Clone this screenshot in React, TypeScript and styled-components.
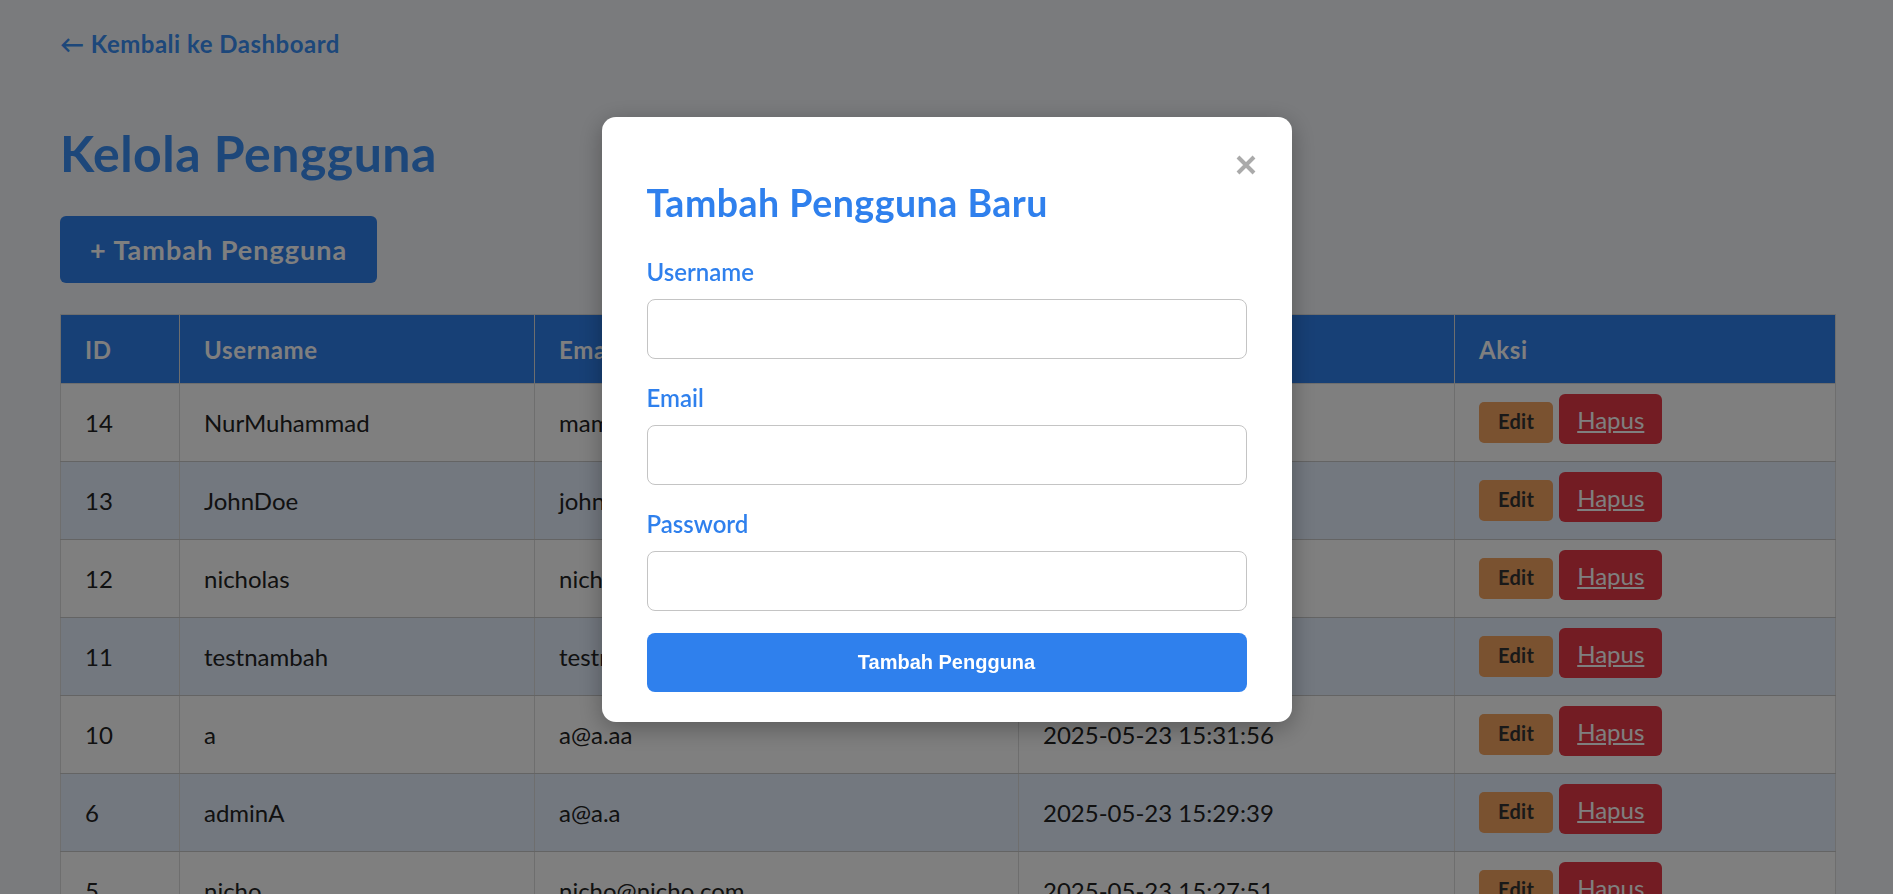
import React from "react";
import styled, { createGlobalStyle } from "styled-components";

const GlobalStyle = createGlobalStyle`
  * { box-sizing: border-box; }
  html, body { margin: 0; padding: 0; }
  body {
    background: #f5f7fa;
    font-family: Lato, "Open Sans", sans-serif;
    color: #222;
  }
`;

const Page = styled.div`
  padding: 28px 57px 40px 60px;
`;

const TopBar = styled.div`
  display: flex;
`;

const BackLink = styled.a`
  font-size: 24px;
  line-height: 32px;
  font-weight: 700;
  letter-spacing: 0.5px;
  color: #3a8ff5;
  text-decoration: none;
`;

const Title = styled.h1`
  margin: 63px 0 33px;
  font-size: 50px;
  line-height: 60px;
  font-weight: 700;
  letter-spacing: 0.5px;
  color: #3a8ff5;
`;

const AddButton = styled.button`
  display: block;
  height: 67px;
  padding: 0 30px;
  margin-bottom: 31px;
  border: none;
  border-radius: 6px;
  background: #2f80ed;
  color: #fff;
  font-family: inherit;
  font-size: 27px;
  font-weight: 700;
  letter-spacing: 1px;
`;

const Table = styled.table`
  width: 100%;
  border-collapse: collapse;
  table-layout: fixed;
  font-size: 24px;
  line-height: 33px;
`;

const Th = styled.th`
  padding: 18px 24px 17px;
  background: #2f80ed;
  color: #fff;
  font-weight: 700;
  letter-spacing: 0.7px;
  text-align: left;
  border: 1px solid #ddd;
`;

const Row = styled.tr`
  background: #fff;
  &:nth-child(even) {
    background: #e6f0ff;
  }
`;

const Td = styled.td`
  padding: 22px 24px;
  border: 1px solid #ddd;
  border-bottom-color: #c8c8c8;
  white-space: nowrap;
  overflow: hidden;
`;

const ActionTd = styled(Td)`
  padding: 19px 24px 25px;
  overflow: visible;
`;

const EditLink = styled.a`
  padding: 7px 19px 10px;
  margin-right: 6px;
  border-radius: 5px;
  background: #f4a460;
  color: #333;
  font-size: 20px;
  line-height: 1;
  font-weight: 700;
  letter-spacing: 0.3px;
  text-decoration: none;
`;

const DeleteLink = styled.a`
  padding: 11px 18px 10px;
  border-radius: 6px;
  background: #e63946;
  color: #fff;
  font-size: 24px;
  line-height: 1;
  text-decoration: underline;
`;

const Overlay = styled.div`
  position: fixed;
  inset: 0;
  display: flex;
  justify-content: center;
  align-items: flex-start;
  padding-top: 117px;
  background: rgba(0, 0, 0, 0.5);
`;

const Modal = styled.div`
  position: relative;
  width: 690px;
  padding: 63px 45px 30px;
  border-radius: 14px;
  background: #fff;
  box-shadow: 0 6px 24px rgba(0, 0, 0, 0.3);
`;

const CloseButton = styled.button`
  position: absolute;
  top: 38px;
  right: 36px;
  width: 20px;
  height: 20px;
  padding: 0;
  border: none;
  background: none;
  color: #aaa;
  display: flex;
`;

const ModalTitle = styled.h2`
  margin: 0 0 31px;
  font-size: 37.5px;
  line-height: 45px;
  font-weight: 700;
  letter-spacing: 0.5px;
  color: #2f80ed;
`;

const Field = styled.div`
  margin-bottom: 23px;
  &:last-of-type {
    margin-bottom: 22px;
  }
`;

const Label = styled.label`
  display: block;
  margin-bottom: 11px;
  font-size: 24px;
  line-height: 32px;
  font-weight: 600;
  color: #2f80ed;
`;

const Input = styled.input`
  display: block;
  width: 100%;
  height: 60px;
  padding: 0 18px;
  border: 1px solid #c4c4c4;
  border-radius: 8px;
  font-family: inherit;
  font-size: 24px;
`;

const SubmitButton = styled.button`
  display: block;
  width: 100%;
  height: 59px;
  border: none;
  border-radius: 8px;
  background: #2f80ed;
  color: #fff;
  font-family: "Liberation Sans", Arial, sans-serif;
  font-size: 20px;
  font-weight: 700;
`;

const users = [
  { id: 14, username: "NurMuhammad", email: "mamad@gmail.com", created: "2025-05-24 09:12:40" },
  { id: 13, username: "JohnDoe", email: "john@doe.com", created: "2025-05-24 08:55:17" },
  { id: 12, username: "nicholas", email: "nicholas@gmail.com", created: "2025-05-23 16:02:11" },
  { id: 11, username: "testnambah", email: "testnambah@gmail.com", created: "2025-05-23 15:40:03" },
  { id: 10, username: "a", email: "a@a.aa", created: "2025-05-23 15:31:56" },
  { id: 6, username: "adminA", email: "a@a.a", created: "2025-05-23 15:29:39" },
  { id: 5, username: "nicho", email: "nicho@nicho.com", created: "2025-05-23 15:27:51" },
];

const fields = [
  { name: "username", label: "Username", type: "text" },
  { name: "email", label: "Email", type: "email" },
  { name: "password", label: "Password", type: "password" },
];

export default function App() {
  return (
    <>
      <GlobalStyle />
      <Page>
        <TopBar>
          <BackLink href="#">← Kembali ke Dashboard</BackLink>
        </TopBar>
        <Title>Kelola Pengguna</Title>
        <AddButton>+ Tambah Pengguna</AddButton>
        <Table>
          <colgroup>
            <col style={{ width: 119 }} />
            <col style={{ width: 355 }} />
            <col style={{ width: 484 }} />
            <col style={{ width: 436 }} />
            <col />
          </colgroup>
          <thead>
            <tr>
              <Th>ID</Th>
              <Th>Username</Th>
              <Th>Email</Th>
              <Th>Tanggal Dibuat</Th>
              <Th>Aksi</Th>
            </tr>
          </thead>
          <tbody>
            {users.map((u) => (
              <Row key={u.id}>
                <Td>{u.id}</Td>
                <Td>{u.username}</Td>
                <Td>{u.email}</Td>
                <Td>{u.created}</Td>
                <ActionTd>
                  <EditLink href="#">Edit</EditLink>
                  <DeleteLink href="#">Hapus</DeleteLink>
                </ActionTd>
              </Row>
            ))}
          </tbody>
        </Table>
      </Page>

      <Overlay>
        <Modal>
          <CloseButton aria-label="Tutup">
            <svg width="20" height="20" viewBox="0 0 20 20">
              <path d="M2 2 L18 18 M18 2 L2 18" stroke="currentColor" strokeWidth="4" />
            </svg>
          </CloseButton>
          <ModalTitle>Tambah Pengguna Baru</ModalTitle>
          <form onSubmit={(e) => e.preventDefault()}>
            {fields.map((f) => (
              <Field key={f.name}>
                <Label htmlFor={f.name}>{f.label}</Label>
                <Input id={f.name} name={f.name} type={f.type} />
              </Field>
            ))}
            <SubmitButton type="submit">Tambah Pengguna</SubmitButton>
          </form>
        </Modal>
      </Overlay>
    </>
  );
}
